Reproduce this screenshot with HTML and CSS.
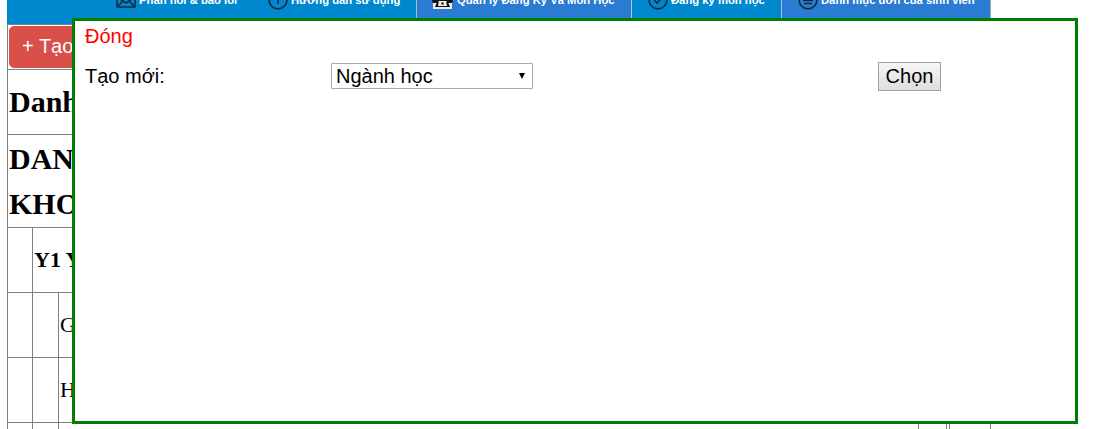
FILE: index.html
```html
<!DOCTYPE html>
<html lang="vi">
<head>
<meta charset="utf-8">
<title>Danh mục</title>
<link rel="stylesheet" href="styles.css">
</head>
<body>
<div class="page">
  <nav class="nav">
    <a class="item feedback"><svg width="20" height="20" viewBox="0 0 20 20"><path d="M1 6 10 0 19 6V17H1ZM1 7 10 13 19 7M1 17 7 11M19 17 13 11"/></svg><span>Phản hồi &amp; báo lỗi</span></a>
    <a class="item guide"><svg width="20" height="20" viewBox="0 0 20 20"><circle cx="10" cy="10" r="8.9"/><path d="M10 8v6M8.5 9H10M10 5v1.5"/></svg><span>Hướng dẫn sử dụng</span></a>
    <a class="item manage active"><svg width="21" height="20" viewBox="0 0 21 20"><path class="paper" d="M1 3H20V19H1Z"/><path class="ink" d="M0 10V7Q10 1 21 7V10L20 13H16L14 11H7L5 13H1ZM5 12H16L18 17H3Z"/><path class="paper" d="M7 11H14L15 16H6Z"/><circle class="ink" cx="10.5" cy="13.5" r="1.2"/></svg><span>Quản lý Đăng Ký Và Môn Học</span></a>
    <a class="item register"><svg width="20" height="20" viewBox="0 0 20 20"><circle cx="10" cy="10" r="8.9"/><path d="M6 9.5 9 13 14 8"/></svg><span>Đăng ký môn học</span></a>
    <a class="item forms active"><svg width="20" height="20" viewBox="0 0 20 20"><circle cx="10" cy="10" r="8.9"/><path d="M6 7.5H14M5 10.5H15M6 13.5H14"/></svg><span>Danh mục đơn của sinh viên</span></a>
  </nav>
  <main class="table">
    <div class="row tools"><button class="create">+ Tạo mới</button></div>
    <div class="row title">Danh mục</div>
    <div class="row group"><div>DANH MỤC<br>KHOA</div></div>
    <div class="row major"><i class="c1"></i><b>Y1 Y khoa</b></div>
    <div class="row entry"><i class="c1"></i><i class="c2"></i><span>Giải phẫu</span></div>
    <div class="row entry"><i class="c1"></i><i class="c2"></i><span>Hóa sinh</span></div>
    <div class="row entry"><i class="c1"></i><i class="c2"></i><i class="c3"></i><i class="c4"></i><i class="c5"></i></div>
  </main>
</div>
<section class="dialog">
  <a class="close">Đóng</a>
  <div class="form">
    <label>Tạo mới:</label>
    <div class="select"><span>Ngành học</span><svg width="6" height="6" viewBox="0 0 6 6"><path d="M0 0H6L3 6Z"/></svg></div>
    <button class="choose">Chọn</button>
  </div>
</section>
</body>
</html>
```
FILE: styles.css
```css
* { box-sizing: border-box; }
body { margin: 0; height: 429px; overflow: hidden; background: #fff; font-family: "Liberation Sans", Arial, sans-serif; color: #000; }
.page { width: 984px; height: 429px; margin-left: 7px; overflow: hidden; }
.nav { display: flex; height: 48px; margin-top: -24px; padding-left: 93px; background: #0088cf; }
.item { display: flex; align-items: center; gap: 4px; padding-left: 16px; color: #fff; font-size: 11.25px; font-weight: bold; white-space: nowrap; }
.item span { padding-bottom: 1px; }
.item svg { flex: none; width: 20px; margin-right: -1px; fill: none; stroke: #152838; stroke-width: 1.6; }
.feedback { width: 152px; }
.guide { width: 165px; border-right: 1px solid #a9b9c5; }
.manage { width: 215px; padding-left: 15px; border-right: 1px solid #b7c6d6; }
.register { width: 150px; border-right: 1px solid #a9c6dc; }
.forms { width: 209px; border-right: 1px solid #aaa; }
.active { background: #2a7bd2; }
.item.manage svg { width: 21px; margin-right: 0; }
.item .paper { fill: #eee; stroke: none; }
.item .ink { fill: #111; stroke: none; }

.table { border: 1px solid #808080; border-width: 0 1px 0 1px; font-family: "Liberation Serif", "Times New Roman", serif; }
.row { display: flex; align-items: center; height: 65px; border-bottom: 1px solid #808080; white-space: nowrap; }
.row.tools { height: 46px; padding: 1px 1px 2px; border-top: 1px solid #808080; }
.create { height: 42px; width: 130px; padding: 0 0 0 12px; border: 1px solid #d9504b; border-radius: 5px; background: #d9504b; color: #fff; font: 20px "Liberation Sans", Arial, sans-serif; text-align: left; }
.title, .group { padding-left: 1px; font-size: 30px; font-weight: bold; line-height: 45px; }
.row.title { padding-bottom: 2px; }
.row.group { height: 93px; }
.row i { flex: none; align-self: stretch; border-right: 1px solid #808080; }
.c1 { width: 25px; }
.c2 { width: 26px; }
.c3 { width: 860px; }
.c4 { width: 28px; }
.c5 { width: 3px; }
.major b { padding-left: 1px; font-size: 22px; }
.entry span { padding-left: 1px; font-size: 22px; }

.dialog { position: absolute; left: 72px; top: 18px; width: 1006px; height: 406px; padding: 3px 10px; border: 3px solid #008000; background: #fff; font-size: 20px; line-height: 24px; }
.close { display: block; color: #f00; }
.form { display: grid; grid-template-columns: 246px 547px 63px; align-items: start; height: 29px; margin-top: 14px; }
.form label { padding-top: 2px; }
.select { display: flex; align-items: center; justify-content: space-between; width: 202px; height: 26px; margin-top: 1px; padding: 0 7px 0 4px; border: 1px solid #a9a9a9; border-radius: 1px; }
.choose { height: 29px; padding: 0; border: 1px solid #a0a0a0; background: linear-gradient(#f6f6f6, #dedede); color: #000; font: 20px "Liberation Sans", Arial, sans-serif; }
```
